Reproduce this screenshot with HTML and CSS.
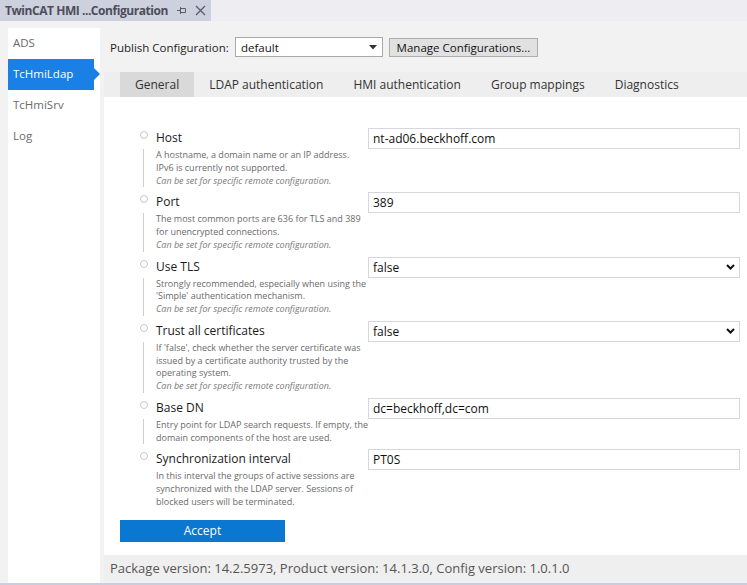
FILE: index.html
```html
<!DOCTYPE html>
<html>
<head>
<meta charset="utf-8">
<link rel="stylesheet" href="styles.css">
</head>
<body>
<div class="titlebar">
  <div class="doc-tab">
    <span class="doc-title">TwinCAT HMI ...Configuration</span>
    <svg class="pin" width="10" height="9" viewBox="0 0 10 9"><path d="M0 4.5H3M3.5 1V8M3.5 2.5H8.5V6.5H3.5" fill="none" stroke="#5a5a6a" stroke-width="1"/></svg>
    <svg class="close" width="11" height="11" viewBox="0 0 11 11"><path d="M1 1L10 10M10 1L1 10" fill="none" stroke="#5a5a6a" stroke-width="1.3"/></svg>
  </div>
</div>
<div class="workspace">
  <nav class="sidebar">
    <div class="nav-item">ADS</div>
    <div class="nav-item active">TcHmiLdap</div>
    <div class="nav-item">TcHmiSrv</div>
    <div class="nav-item">Log</div>
  </nav>
  <main class="main">
    <div class="publish-row">
      <span class="publish-label">Publish Configuration:</span>
      <div class="publish-select"><span>default</span><svg width="8" height="5" viewBox="0 0 8 5"><path d="M0 0H8L4 4.5Z" fill="#333"/></svg></div>
      <div class="manage-btn">Manage Configurations...</div>
    </div>
    <div class="tabs">
      <div class="tab active">General</div>
      <div class="tab">LDAP authentication</div>
      <div class="tab">HMI authentication</div>
      <div class="tab">Group mappings</div>
      <div class="tab">Diagnostics</div>
    </div>
    <div class="panel">
      <div class="fields">
        <div class="field">
          <div class="field-head"><span class="radio"></span><span class="label">Host</span><div class="input">nt-ad06.beckhoff.com</div></div>
          <div class="desc">A hostname, a domain name or an IP address.<br>IPv6 is currently not supported.<br><i>Can be set for specific remote configuration.</i></div>
        </div>
        <div class="field">
          <div class="field-head"><span class="radio"></span><span class="label">Port</span><div class="input">389</div></div>
          <div class="desc">The most common ports are 636 for TLS and 389<br>for unencrypted connections.<br><i>Can be set for specific remote configuration.</i></div>
        </div>
        <div class="field">
          <div class="field-head"><span class="radio"></span><span class="label">Use TLS</span><div class="input select"><span>false</span><svg width="9" height="6" viewBox="0 0 9 6"><path d="M1 1L4.5 4.5L8 1" fill="none" stroke="#111" stroke-width="2"/></svg></div></div>
          <div class="desc">Strongly recommended, especially when using the<br>'Simple' authentication mechanism.<br><i>Can be set for specific remote configuration.</i></div>
        </div>
        <div class="field">
          <div class="field-head"><span class="radio"></span><span class="label">Trust all certificates</span><div class="input select"><span>false</span><svg width="9" height="6" viewBox="0 0 9 6"><path d="M1 1L4.5 4.5L8 1" fill="none" stroke="#111" stroke-width="2"/></svg></div></div>
          <div class="desc">If 'false', check whether the server certificate was<br>issued by a certificate authority trusted by the<br>operating system.<br><i>Can be set for specific remote configuration.</i></div>
        </div>
        <div class="field">
          <div class="field-head"><span class="radio"></span><span class="label">Base DN</span><div class="input">dc=beckhoff,dc=com</div></div>
          <div class="desc">Entry point for LDAP search requests. If empty, the<br>domain components of the host are used.</div>
        </div>
        <div class="field">
          <div class="field-head"><span class="radio"></span><span class="label">Synchronization interval</span><div class="input">PT0S</div></div>
          <div class="desc no-line">In this interval the groups of active sessions are<br>synchronized with the LDAP server. Sessions of<br>blocked users will be terminated.</div>
        </div>
      </div>
      <div class="accept">Accept</div>
    </div>
    <div class="footer">Package version: 14.2.5973, Product version: 14.1.3.0, Config version: 1.0.1.0</div>
  </main>
</div>
</body>
</html>
```
FILE: styles.css
```css
* { box-sizing: border-box; }
html, body { margin: 0; padding: 0; }
body {
  width: 747px;
  height: 585px;
  overflow: hidden;
  background: #f2f2f2;
  font-family: "Open Sans", "Noto Sans", sans-serif;
  color: #222;
  border-bottom: 2px solid #cccbe0;
}
.titlebar {
  height: 21px;
  background: #eeeef2;
  display: flex;
}
.doc-tab {
  width: 211px;
  background: #cdd1dd;
  display: flex;
  align-items: center;
  padding-left: 5px;
}
.doc-title {
  font-weight: bold;
  font-size: 12px;
  color: #4d4d5c;
  letter-spacing: -0.45px;
  white-space: nowrap;
}
.pin { margin-left: 9px; }
.close { margin-left: 8px; }
.workspace {
  display: flex;
  padding-top: 7px;
  height: 562px;
}
.sidebar {
  width: 92px;
  margin-left: 8px;
  background: #fff;
  flex: none;
}
.nav-item {
  height: 31px;
  line-height: 30px;
  padding-left: 5px;
  font-size: 11.5px;
  color: #6a6a6a;
  width: 86px;
  position: relative;
}
.nav-item.active {
  background: #1a80e6;
  color: #fff;
}
.nav-item.active::after {
  content: "";
  position: absolute;
  right: -6px;
  top: 9px;
  border-left: 6px solid #1a80e6;
  border-top: 6.5px solid transparent;
  border-bottom: 6.5px solid transparent;
}
.main {
  margin-left: 4px;
  flex: 1;
  display: flex;
  flex-direction: column;
}
.publish-row {
  display: flex;
  align-items: center;
  height: 20px;
  margin-top: 9px;
  margin-bottom: 15px;
  padding-left: 6px;
  font-size: 11.5px;
}
.publish-label { width: 125px; color: #1e1e1e; }
.publish-select {
  width: 148px;
  height: 20px;
  background: #fff;
  border: 1px solid #a8a8a8;
  display: flex;
  align-items: center;
  justify-content: space-between;
  padding: 0 5px 0 5px;
  color: #111;
}
.manage-btn {
  margin-left: 6px;
  width: 149px;
  height: 19px;
  background: #e1e1e1;
  border: 1px solid #adadad;
  display: flex;
  align-items: center;
  justify-content: center;
  color: #111;
}
.tabs {
  height: 25px;
  background: #eeeeee;
  display: flex;
  padding-left: 16px;
}
.tab {
  padding: 0 15px;
  line-height: 25px;
  font-size: 12px;
  color: #333;
}
.tab.active { background: #d9d9d9; }
.panel {
  background: #fff;
  height: 458px;
  padding-top: 31px;
}
.fields { margin-left: 36px; }
.field { margin-bottom: 5px; }
.field:last-child { margin-bottom: 0; }
.field-head {
  display: flex;
  height: 21px;
}
.radio {
  width: 8px;
  height: 8px;
  border: 1px solid #c8c8c8;
  border-radius: 50%;
  margin-top: 3px;
  margin-left: -0.5px;
  margin-right: 8.5px;
  flex: none;
}
.label {
  width: 212px;
  line-height: 20px;
  font-size: 12px;
  color: #1a1a1a;
  white-space: nowrap;
}
.input {
  width: 372px;
  height: 21px;
  border: 1px solid #d6d6e0;
  background: #fff;
  font-size: 12px;
  line-height: 19px;
  padding-left: 4px;
  color: #111;
  white-space: nowrap;
}
.input.select {
  display: flex;
  justify-content: space-between;
  align-items: center;
  padding-right: 4px;
}
.desc {
  margin-left: 3px;
  border-left: 1px solid #cfcfcf;
  padding-left: 12px;
  font-size: 9px;
  line-height: 12.75px;
  color: #6a6a6a;
  white-space: nowrap;
}
.desc.no-line { border-left-color: transparent; }
.desc i { color: #7a7a7a; }
.accept {
  margin-top: 11px;
  margin-left: 16px;
  width: 165px;
  height: 22px;
  background: #0a78d0;
  color: #fff;
  font-size: 12px;
  line-height: 22px;
  text-align: center;
}
.footer {
  height: 27px;
  line-height: 27px;
  padding-left: 6px;
  font-size: 13px;
  color: #555;
  background: #efefef;
}
```
